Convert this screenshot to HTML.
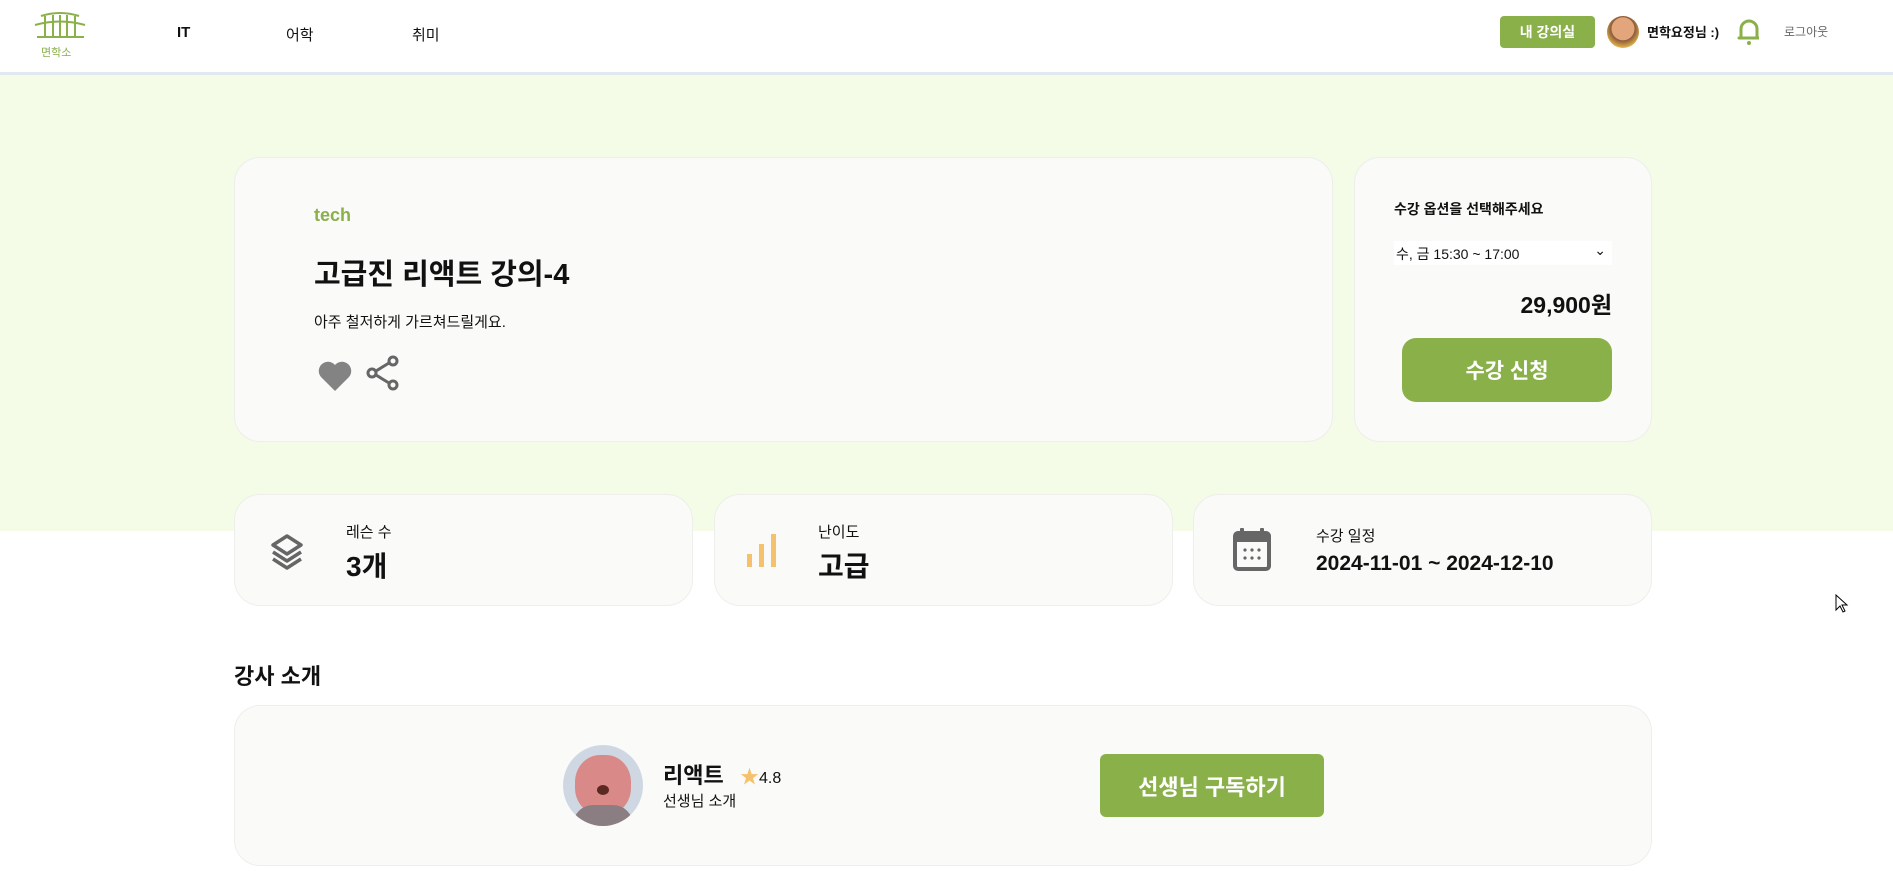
<!DOCTYPE html>
<html><head><meta charset="utf-8"><style>
*{margin:0;padding:0;box-sizing:border-box}
body{width:1893px;height:875px;position:relative;background:#fff;font-family:"Liberation Sans","Noto Sans CJK KR",sans-serif;color:#111;overflow:hidden}
.a{position:absolute;white-space:nowrap}
.card{position:absolute;background:#fafaf8;border:1px solid #eeeeea;border-radius:26px}
.btn{position:absolute;background:#8ab04a;color:#fff;font-weight:bold;display:flex;align-items:center;justify-content:center}
</style></head><body>
<div class="a" style="left:0;top:0;width:1893px;height:72px;background:#fff"></div>
<div class="a" style="left:0;top:72px;width:1893px;height:3px;background:#e2e8f0"></div>
<div class="a" style="left:0;top:75px;width:1893px;height:456px;background:#f4fbe7"></div>
<!-- logo -->
<svg class="a" style="left:33px;top:10px" width="55" height="32" viewBox="0 0 55 32"><g stroke="#8ab04a" stroke-width="2" fill="none"><path d="M8 6 Q27 0 46 6"/><path d="M2 15 Q27 8 52 15"/><path d="M12 6 V27 M20 5 V27 M27 5 V27 M34 5 V27 M42 6 V27"/><path d="M4 27 H51"/></g></svg>
<div class="a" style="left:41px;top:44px;font-size:11px;color:#8ab04a">면학소</div>
<div class="a" style="left:177px;top:24px;font-size:15px;font-weight:bold">IT</div>
<div class="a" style="left:286px;top:24px;font-size:15px">어학</div>
<div class="a" style="left:412px;top:24px;font-size:15px">취미</div>
<div class="btn" style="left:1500px;top:16px;width:95px;height:32px;border-radius:4px;font-size:14px">내 강의실</div>
<div class="a" style="left:1607px;top:16px;width:32px;height:32px;border-radius:50%;background:radial-gradient(circle at 50% 40%,#e3a57c 45%,#8a5a3a 47%,#f2c14e 80%)"></div>
<div class="a" style="left:1647px;top:22px;font-size:13px;font-weight:bold">면학요정님 :)</div>
<svg class="a" style="left:1737px;top:16px" width="24" height="30" viewBox="0 0 24 30"><path d="M4 22 V13 A8 8 0 0 1 20 13 V22 H2 H22" stroke="#8ab04a" stroke-width="3" fill="none" stroke-linejoin="round"/><circle cx="12" cy="27" r="2" fill="#8ab04a"/></svg>
<div class="a" style="left:1784px;top:23px;font-size:12px;color:#666">로그아웃</div>

<div class="card" style="left:234px;top:157px;width:1099px;height:285px"></div>
<div class="a" style="left:314px;top:205px;font-size:18px;color:#8ab04a;font-weight:bold">tech</div>
<div class="a" style="left:314px;top:251px;font-size:29px;font-weight:bold">고급진 리액트 강의-4</div>
<div class="a" style="left:314px;top:311px;font-size:15px">아주 철저하게 가르쳐드릴게요.</div>
<svg class="a" style="left:317px;top:360px" width="36" height="32" viewBox="0 0 36 32"><path d="M18 31 L4 17 A9 9 0 0 1 18 5 A9 9 0 0 1 32 17 Z" fill="#838383"/></svg>
<svg class="a" style="left:366px;top:355px" width="34" height="36" viewBox="0 0 34 36"><g stroke="#666" stroke-width="3" fill="none"><circle cx="27" cy="6" r="4"/><circle cx="6" cy="18" r="4"/><circle cx="27" cy="30" r="4"/><path d="M10 16 L23 8 M10 20 L23 28"/></g></svg>

<div class="card" style="left:1354px;top:157px;width:298px;height:285px"></div>
<div class="a" style="left:1394px;top:199px;font-size:14px;font-weight:bold">수강 옵션을 선택해주세요</div>
<div class="a" style="left:1394px;top:241px;width:218px;height:24px;background:#fff;font-size:14px;padding:3px 2px">수, 금 15:30 ~ 17:00<span style="position:absolute;right:6px;top:1px">⌄</span></div>
<div class="a" style="left:1394px;top:286px;width:218px;text-align:right;font-size:23px;font-weight:bold">29,900원</div>
<div class="btn" style="left:1402px;top:338px;width:210px;height:64px;border-radius:14px;font-size:21px">수강 신청</div>

<div class="card" style="left:234px;top:494px;width:459px;height:112px"></div>
<svg class="a" style="left:267px;top:533px" width="40" height="40" viewBox="0 0 40 40"><g stroke="#666" stroke-width="3.5" fill="none" stroke-linejoin="round"><path d="M20 3 L34 12 L20 21 L6 12 Z"/><path d="M6 19 L20 28 L34 19"/><path d="M6 26 L20 35 L34 26"/></g></svg>
<div class="a" style="left:346px;top:521px;font-size:15px">레슨 수</div>
<div class="a" style="left:346px;top:545px;font-size:28px;font-weight:bold">3개</div>

<div class="card" style="left:714px;top:494px;width:459px;height:112px"></div>
<svg class="a" style="left:745px;top:532px" width="36" height="36" viewBox="0 0 36 36"><g fill="#f5c16c"><rect x="2" y="22" width="5" height="13"/><rect x="14" y="12" width="5" height="23"/><rect x="26" y="2" width="5" height="33"/></g></svg>
<div class="a" style="left:818px;top:521px;font-size:15px">난이도</div>
<div class="a" style="left:818px;top:545px;font-size:28px;font-weight:bold">고급</div>

<div class="card" style="left:1193px;top:494px;width:459px;height:112px"></div>
<svg class="a" style="left:1232px;top:528px" width="40" height="44" viewBox="0 0 40 44"><g fill="#666"><rect x="8" y="0" width="4" height="8" rx="1"/><rect x="28" y="0" width="4" height="8" rx="1"/></g><rect x="3" y="5" width="34" height="36" rx="3" fill="none" stroke="#666" stroke-width="4"/><rect x="3" y="5" width="34" height="9" fill="#666"/><g fill="#666"><circle cx="13" cy="22" r="1.6"/><circle cx="20" cy="22" r="1.6"/><circle cx="27" cy="22" r="1.6"/><circle cx="13" cy="30" r="1.6"/><circle cx="20" cy="30" r="1.6"/><circle cx="27" cy="30" r="1.6"/></g></svg>
<div class="a" style="left:1316px;top:525px;font-size:15px">수강 일정</div>
<div class="a" style="left:1316px;top:552px;font-size:21px;font-weight:bold">2024-11-01 ~ 2024-12-10</div>

<div class="a" style="left:234px;top:659px;font-size:22px;font-weight:bold">강사 소개</div>
<div class="card" style="left:234px;top:705px;width:1418px;height:161px"></div>
<div class="a" style="left:563px;top:745px;width:80px;height:81px;border-radius:50%;overflow:hidden;background:#cfd8e2">
<div class="a" style="left:12px;top:10px;width:56px;height:60px;border-radius:45%;background:#d98a88"></div>
<div class="a" style="left:34px;top:40px;width:12px;height:10px;border-radius:50%;background:#5a2a22"></div>
<div class="a" style="left:10px;top:60px;width:60px;height:30px;background:#8a7e82;border-radius:20px 20px 0 0"></div>
</div>
<div class="a" style="left:663px;top:758px;font-size:22px;font-weight:bold">리액트</div>
<div class="a" style="left:740px;top:762px;font-size:16px"><span style="color:#f5c16c;font-size:19px">★</span>4.8</div>
<div class="a" style="left:663px;top:790px;font-size:15px">선생님 소개</div>
<div class="btn" style="left:1100px;top:754px;width:224px;height:63px;border-radius:6px;font-size:22px">선생님 구독하기</div>
<svg class="a" style="left:1835px;top:594px" width="14" height="20" viewBox="0 0 14 20"><path d="M1 1 L1 16 L5 12 L8 18 L10 17 L7 11 L12 11 Z" fill="#fff" stroke="#000" stroke-width="1"/></svg>
</body></html>
